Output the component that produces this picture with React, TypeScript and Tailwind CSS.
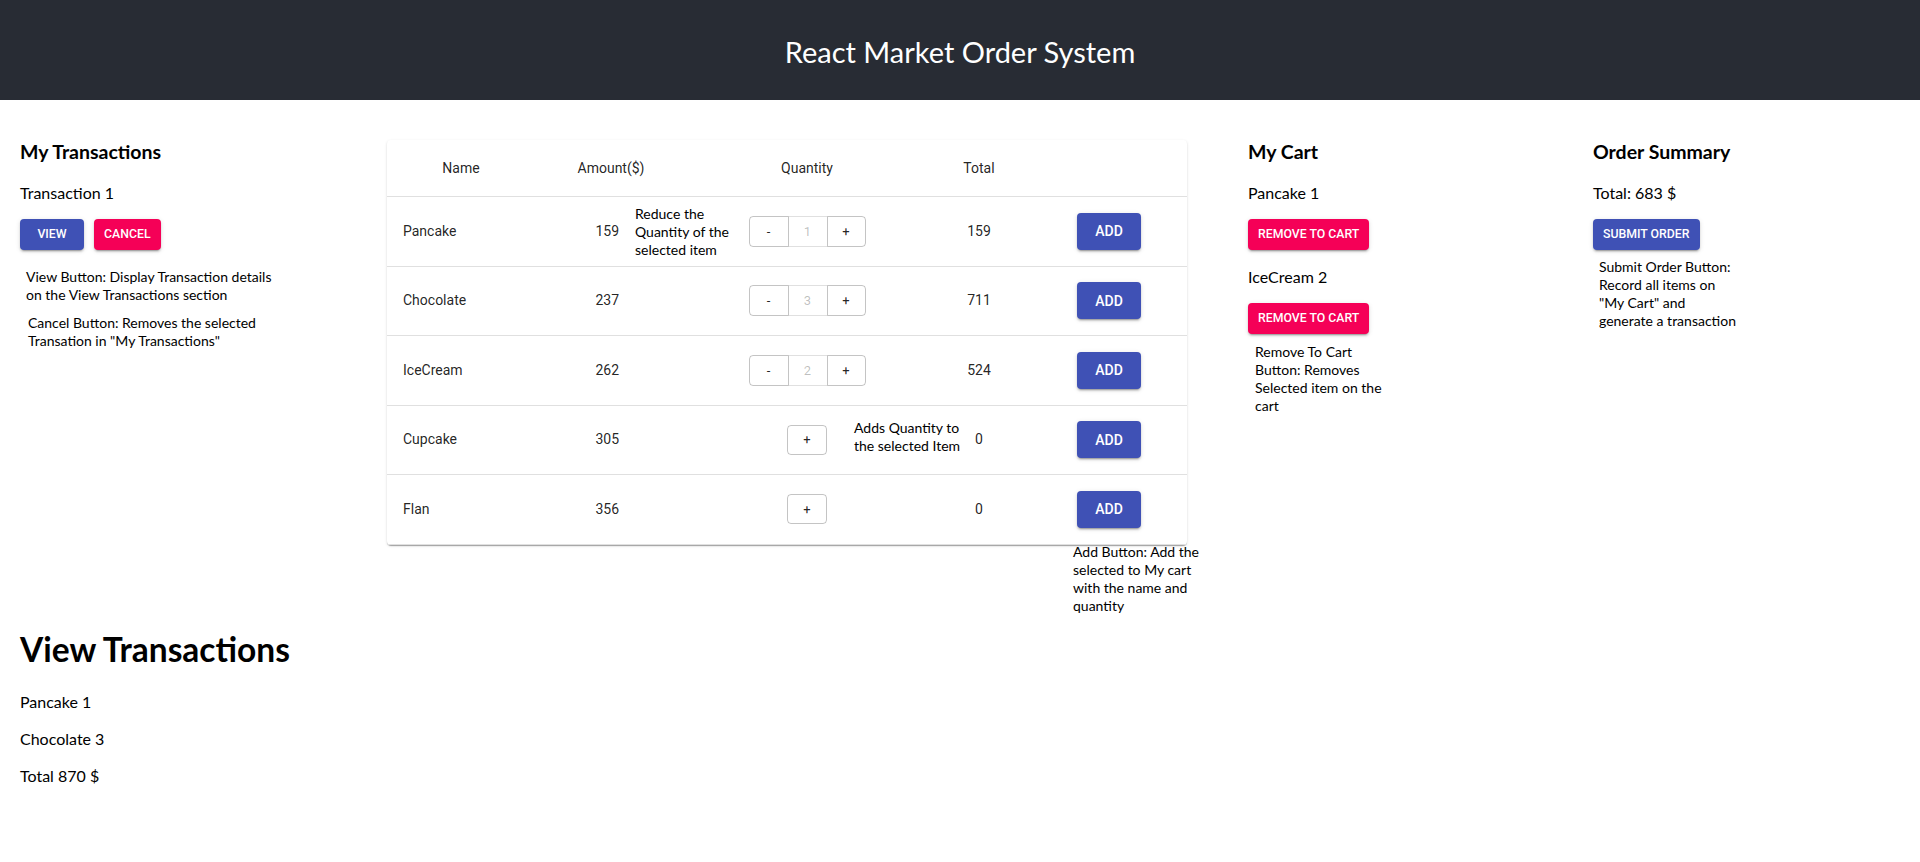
import React from 'react';

type Row = {
  name: string;
  amount: number;
  qty: number;
  total: number;
};

const rows: Row[] = [
  { name: 'Pancake', amount: 159, qty: 1, total: 159 },
  { name: 'Chocolate', amount: 237, qty: 3, total: 711 },
  { name: 'IceCream', amount: 262, qty: 2, total: 524 },
  { name: 'Cupcake', amount: 305, qty: 0, total: 0 },
  { name: 'Flan', amount: 356, qty: 0, total: 0 },
];

const raised =
  "font-['Roboto',sans-serif] font-medium uppercase rounded-[4px] text-white leading-[1.75] shadow-[0_3px_1px_-2px_rgba(0,0,0,0.2),0_2px_2px_0_rgba(0,0,0,0.14),0_1px_5px_0_rgba(0,0,0,0.12)]";

const SmallButton = ({ children, secondary }: { children: React.ReactNode; secondary?: boolean }) => (
  <button
    className={`${raised} h-[31px] min-w-[64px] px-[10px] text-[12.3px] ${secondary ? 'bg-[#f50057]' : 'bg-[#3f51b5]'}`}
  >
    {children}
  </button>
);

const Note = ({ children, className = '' }: { children: React.ReactNode; className?: string }) => (
  <div className={`font-['Segoe_UI','Lato',sans-serif] text-[14px] leading-[18px] text-black whitespace-nowrap ${className}`}>
    {children}
  </div>
);

const QuantityControl = ({ qty }: { qty: number }) => {
  if (qty === 0) {
    return (
      <button className="h-[30px] w-[40px] rounded-[4px] border border-[rgba(0,0,0,0.23)] text-[13px] text-[rgba(0,0,0,0.87)]">
        +
      </button>
    );
  }
  return (
    <div className="flex h-[31px] text-[13px]">
      <button className="w-[40px] rounded-l-[4px] border border-[rgba(0,0,0,0.23)] text-[rgba(0,0,0,0.87)]">-</button>
      <button className="w-[38px] border-y border-[rgba(0,0,0,0.12)] text-[rgba(0,0,0,0.26)]">{qty}</button>
      <button className="w-[39px] rounded-r-[4px] border border-[rgba(0,0,0,0.23)] text-[rgba(0,0,0,0.87)]">+</button>
    </div>
  );
};

export default function App() {
  return (
    <div className="min-h-screen bg-white font-['Segoe_UI','Lato',sans-serif] text-black">
      <header className="h-[100px] bg-[#282c34] flex items-center justify-center">
        <h1 className="text-[29px] text-white pt-[4px]">React Market Order System</h1>
      </header>

      <div className="flex px-5 pt-5">
        {/* transactions */}
        <div className="w-[367px] shrink-0">
          <h3 className="text-[19.5px] font-bold leading-[25px] my-[18.72px]">My Transactions</h3>
          <p className="text-base leading-[21px] mb-4">Transaction 1</p>
          <div className="flex gap-[10px]">
            <SmallButton>View</SmallButton>
            <SmallButton secondary>Cancel</SmallButton>
          </div>
          <Note className="mt-[18px] ml-[6px]">
            View Button: Display Transaction details
            <br />
            on the View Transactions section
          </Note>
          <Note className="mt-[10px] ml-[8px]">
            Cancel Button: Removes the selected
            <br />
            Transation in "My Transactions"
          </Note>
        </div>

        {/* products table */}
        <div className="relative mt-5 w-[800px] shrink-0">
          <div className="rounded-[4px] bg-white font-['Roboto',sans-serif] text-[14px] text-[rgba(0,0,0,0.87)] shadow-[0_2px_1px_-1px_rgba(0,0,0,0.2),0_1px_1px_0_rgba(0,0,0,0.14),0_1px_3px_0_rgba(0,0,0,0.12)]">
            <div className="flex h-[57px] items-center border-b border-[#e0e0e0]">
              <div className="w-[148px] text-center">Name</div>
              <div className="w-[152px] text-center">Amount($)</div>
              <div className="w-[240px] text-center">Quantity</div>
              <div className="w-[104px] text-center">Total</div>
              <div className="w-[156px]" />
            </div>
            {rows.map(r => (
              <div key={r.name} className="flex h-[69.5px] items-center border-b border-[#e0e0e0]">
                <div className="w-[148px] pl-4">{r.name}</div>
                <div className="w-[152px] pr-[68px] text-right">{r.amount}</div>
                <div className="w-[240px] flex justify-center">
                  <QuantityControl qty={r.qty} />
                </div>
                <div className="w-[104px] text-center">{r.total}</div>
                <div className="w-[156px] flex justify-center">
                  <button className={`${raised} h-[37px] min-w-[64px] px-4 text-[14px] bg-[#3f51b5]`}>Add</button>
                </div>
              </div>
            ))}
          </div>
          <Note className="absolute left-[248px] top-[65px]">
            Reduce the
            <br />
            Quantity of the
            <br />
            selected item
          </Note>
          <Note className="absolute left-[467px] top-[279px]">
            Adds Quantity to
            <br />
            the selected Item
          </Note>
          <Note className="absolute left-[686px] top-[403px]">
            Add Button: Add the
            <br />
            selected to My cart
            <br />
            with the name and
            <br />
            quantity
          </Note>
        </div>

        {/* cart */}
        <div className="ml-[61px] w-[345px] shrink-0">
          <h3 className="text-[19.5px] font-bold leading-[25px] my-[18.72px]">My Cart</h3>
          <p className="text-base leading-[21px] mb-4">Pancake 1</p>
          <SmallButton secondary>Remove To Cart</SmallButton>
          <p className="text-base leading-[21px] my-4">IceCream 2</p>
          <SmallButton secondary>Remove To Cart</SmallButton>
          <Note className="mt-[9px] ml-[7px]">
            Remove To Cart
            <br />
            Button: Removes
            <br />
            Selected item on the
            <br />
            cart
          </Note>
        </div>

        {/* summary */}
        <div className="flex-1">
          <h3 className="text-[19.5px] font-bold leading-[25px] my-[18.72px]">Order Summary</h3>
          <p className="text-base leading-[21px] mb-4">Total: 683 $</p>
          <SmallButton>Submit Order</SmallButton>
          <Note className="mt-[8px] ml-[6px]">
            Submit Order Button:
            <br />
            Record all items on
            <br />
            "My Cart" and
            <br />
            generate a transaction
          </Note>
        </div>
      </div>

      <div className="px-5">
        <h1 className="text-[33.5px] font-bold leading-[42px] mt-[83px] mb-[21.44px]">View Transactions</h1>
        <p className="text-base leading-[21px] mb-4">Pancake 1</p>
        <p className="text-base leading-[21px] mb-4">Chocolate 3</p>
        <p className="text-base leading-[21px] mb-4">Total 870 $</p>
      </div>
    </div>
  );
}
